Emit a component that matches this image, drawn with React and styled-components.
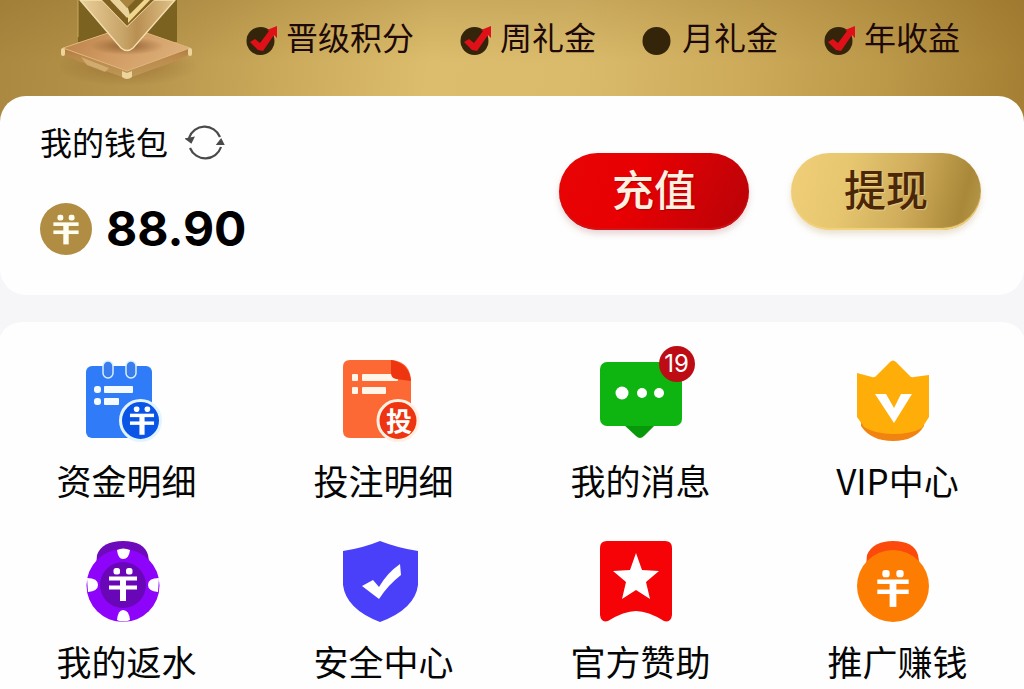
import React from "react";
import styled, { createGlobalStyle } from 'styled-components';

const GlobalStyle = createGlobalStyle`
  body {
    margin: 0;
    background-color: #f6f5f8;
    font-family: "Noto Sans CJK SC", "Noto Sans", sans-serif;
    color: #060606;
  }
`

const Page = styled.div`
  width: 100%;
  overflow: hidden;
`

const Header = styled.header`
  display: flex;
  align-items: flex-start;
  gap: 46px;
  padding: 0 32px 28px 60px;
  background:
    linear-gradient(180deg, rgba(120, 84, 20, 0.18), rgba(120, 84, 20, 0) 50%),
    linear-gradient(96deg, #aa8840 0%, #b6944b 14%, #cbaa5b 28%, #dcbd6d 42%, #dabb6c 56%, #cdab5b 72%, #bc9849 86%, #a47f33 100%);
`

const Emblem = styled.svg`
  display: block;
  flex: none;
  width: 140px;
  height: 96px;
`

const Perks = styled.ul`
  display: flex;
  gap: 46px;
  margin: 0;
  padding: 15px 0 0;
  list-style: none;
`

const Perk = styled.li`
  display: flex;
  align-items: flex-end;
  gap: 8px;
  font-size: 32px;
  line-height: 42px;
  white-space: nowrap;
  color: #1d0a08;
`

const PerkIcon = styled.svg`
  width: 32px;
  height: 32px;
`

const Wallet = styled.section`
  display: flex;
  justify-content: space-between;
  margin-top: -28px;
  padding: 24px 43px 36px 40px;
  background-color: #fefefe;
  border-radius: 26px;
`

const WalletTitle = styled.h2`
  display: flex;
  align-items: flex-end;
  gap: 17px;
  margin: 0;
  font-size: 32px;
  font-weight: 400;
  line-height: 42px;
`

const RefreshButton = styled.button`
  display: flex;
  padding: 0;
  border: none;
  background: none;
  cursor: pointer;
`

const Balance = styled.div`
  display: flex;
  align-items: center;
  gap: 14px;
  margin-top: 37px;
  font-family: Inter, "Liberation Sans", sans-serif;
  font-size: 48px;
  font-weight: 700;
  line-height: 60px;
  color: #000;
`

const Actions = styled.div`
  display: flex;
  align-items: flex-start;
  gap: 42px;
  padding-top: 33px;
`

const ActionButton = styled.button`
  width: 190px;
  height: 77px;
  padding: 0 0 8px;
  border: none;
  border-radius: 39px;
  font-family: inherit;
  font-size: 42px;
  font-weight: 500;
  line-height: 68px;
  cursor: pointer;
  color: ${props => props.$gold ? '#4b2708' : '#fff1e2'};
  background: ${props => props.$gold
    ? 'linear-gradient(105deg, #f0cf78 0%, #e6c66f 30%, #cfad5c 60%, #a98839 88%, #b89a4a 100%)'
    : 'linear-gradient(115deg, #e80406 0%, #e80002 40%, #cf0206 70%, #b80308 100%)'};
  box-shadow:
    inset 0 -2px 1px ${props => props.$gold ? '#f3d27c' : '#cf1517'},
    0 4px 6px ${props => props.$gold ? 'rgba(190, 160, 100, 0.3)' : 'rgba(170, 90, 90, 0.25)'};
  text-shadow: 1px 1px 1px ${props => props.$gold ? 'rgba(255, 236, 170, 0.5)' : 'rgba(120, 0, 0, 0.5)'};
`

const Menu = styled.nav`
  display: grid;
  grid-template-columns: repeat(4, 1fr);
  row-gap: 39px;
  margin: 27px -2px 0;
  padding: 38px 0 24px;
  background-color: #fefefe;
  border-radius: 24px 24px 0 0;
`

const MenuItem = styled.a`
  display: flex;
  flex-direction: column;
  align-items: center;
  gap: 16px;
  font-size: 35px;
  line-height: 44px;
  white-space: nowrap;
  text-decoration: none;
  color: inherit;
`

const IconBox = styled.span`
  position: relative;
  width: 82px;
  height: 82px;
`

const MenuSvg = styled.svg`
  display: block;
  width: 82px;
  height: 82px;
`

const Badge = styled.span`
  position: absolute;
  top: -14px;
  left: 59px;
  width: 36px;
  height: 36px;
  border-radius: 50%;
  background-color: #bd0c14;
  font-family: Inter, "Liberation Sans", sans-serif;
  font-size: 24px;
  line-height: 36px;
  text-align: center;
  color: #fff;
`

// coin sign, drawn around its own centre
const CoinSign = ({ x, y, scale = 1, color = '#fff' }) => (
  <g transform={`translate(${x} ${y}) scale(${scale})`} fill={color}>
    <rect x="-9.500" y="-17" width="6.500" height="6.500" rx="2.500" />
    <rect x="3" y="-17" width="6.500" height="6.500" rx="2.500" />
    <rect x="-14" y="-8.500" width="28" height="4" />
    <rect x="-14" y="0.500" width="28" height="4" />
    <rect x="-3" y="-7" width="6" height="23" />
  </g>
)

const VipEmblem = () => (
  <Emblem viewBox="0 0 140 96" aria-hidden="true">
    <defs>
      <linearGradient id="plate" x1="0" y1="0" x2="1" y2="0.3">
        <stop offset="0" stopColor="#b97f47" />
        <stop offset="0.5" stopColor="#d09a62" />
        <stop offset="1" stopColor="#dcae78" />
      </linearGradient>
      <linearGradient id="vee" x1="0" y1="0" x2="1" y2="0">
        <stop offset="0" stopColor="#ead09a" />
        <stop offset="0.45" stopColor="#c8a468" />
        <stop offset="0.6" stopColor="#b98f52" />
        <stop offset="1" stopColor="#e0c288" />
      </linearGradient>
      <linearGradient id="edge" x1="0" y1="0" x2="0" y2="1">
        <stop offset="0" stopColor="#b17a40" />
        <stop offset="1" stopColor="#d2a766" stopOpacity="0.5" />
      </linearGradient>
      <radialGradient id="shade">
        <stop offset="0" stopColor="#7d4f22" stopOpacity="0.75" />
        <stop offset="1" stopColor="#7d4f22" stopOpacity="0" />
      </radialGradient>
    </defs>
    <ellipse cx="67" cy="66" rx="72" ry="20" fill="url(#shade)" opacity="0.55" />
    <path d="M18 0H117V42H18Z" fill="#7c6220" />
    <path d="M18 0V37" stroke="#caa75a" />
    <path d="M3 48L67 70L130 48V54L116 61L72 77H62L18 61L3 54Z" fill="url(#edge)" />
    <path d="M3 48L60 29H75L130 48L67 71Z" fill="url(#plate)" stroke="#dfb67c" strokeWidth="1" />
    <ellipse cx="67" cy="46" rx="37" ry="9" fill="url(#shade)" />
    <path d="M21 57L49 68L45 72L27 65Z" fill="#dcb77d" opacity="0.7" />
    <g fill="#edd39c">
      <rect x="1" y="48" width="4" height="8" rx="2" />
      <rect x="128" y="48" width="4" height="8" rx="2" />
      <path d="M62 71L67 73L72 71V77Q67 81 62 77Z" />
    </g>
    <path d="M20 0L61 48Q67 53 73 48L115 0H94L67 26L42 0Z" fill="url(#vee)" stroke="#f3dfad" strokeWidth="1.4" />
    <path d="M42 0L67 26L94 0H86L67 18L50 0Z" fill="#80601f" />
    <path d="M50 0L67 18L70 15L68 8L60 0Z" fill="#ead39a" />
    <path d="M84 0L68 16V23L90 0Z" fill="#f0d58e" />
    <path d="M60 0L67 8L75 0Z" fill="#a9843e" />
  </Emblem>
)

const perks = [
  { label: '晋级积分', checked: true },
  { label: '周礼金', checked: true },
  { label: '月礼金', checked: false },
  { label: '年收益', checked: true },
]

const PerkMark = ({ checked }) => (
  <PerkIcon viewBox="0 0 32 32" aria-hidden="true">
    <circle cx="14.5" cy="16" r="14" fill="#33240a" />
    {checked && (
      <path d="M4 17L9 14L14 18L23 6L21 5L31 1L31 13L28 10L17 26L12 25Z" fill="#df1018" />
    )}
  </PerkIcon>
)

const FundsIcon = () => (
  <MenuSvg viewBox="0 0 82 82">
    <rect x="0" y="6" width="66" height="72" rx="6" fill="#307cf8" />
    <rect x="17" y="1" width="10" height="17" rx="5" fill="#3b7dee" stroke="#d9f0ff" strokeWidth="1.5" />
    <rect x="40" y="1" width="10" height="17" rx="5" fill="#3b7dee" stroke="#d9f0ff" strokeWidth="1.5" />
    <g fill="#f4fbff">
      <rect x="8" y="26" width="7" height="7" rx="3" />
      <rect x="18" y="26" width="29" height="7" rx="1" />
      <rect x="8" y="38" width="7" height="7" rx="3" />
      <rect x="18" y="38" width="15" height="7" rx="1" />
    </g>
    <circle cx="54.500" cy="60.500" r="20" fill="#0a55e6" stroke="#e4f4ff" strokeWidth="3" />
    <CoinSign x={56} y={61} scale={0.86} />
  </MenuSvg>
)

const BetSvg = styled(MenuSvg)`
  text {
    font-size: 26px;
    font-weight: 700;
  }
`

const BetsIcon = () => (
  <BetSvg viewBox="0 0 82 82">
    <path d="M7 0H50Q68 3 68 22V78H7Q0 78 0 71V7Q0 0 7 0Z" fill="#fc6935" />
    <g fill="#fff5e8">
      <rect x="9" y="14" width="6" height="7" rx="1" />
      <rect x="19" y="14" width="36" height="7" rx="1" />
      <rect x="9" y="27" width="6" height="7" rx="1" />
      <rect x="19" y="27" width="24" height="7" rx="1" />
    </g>
    <path d="M48 0Q66 3 68 21L53 19Q48 18 48 13Z" fill="#ee3510" />
    <circle cx="55" cy="60.500" r="20" fill="#ee3410" stroke="#fff0e2" strokeWidth="3" />
    <text x="56" y="71" textAnchor="middle" fill="#fff">投</text>
  </BetSvg>
)

const MessageIcon = () => (
  <MenuSvg viewBox="0 0 82 82">
    <path d="M23 64H56L44 76Q40 80 36 76Z" fill="#079909" />
    <rect x="0" y="2" width="82" height="64" rx="7" fill="#0eb510" />
    <circle cx="22" cy="33" r="6.500" fill="#fff" />
    <circle cx="42" cy="33" r="5" fill="#fff" />
    <circle cx="59" cy="33" r="5" fill="#fff" />
  </MenuSvg>
)

const VipIcon = () => (
  <MenuSvg viewBox="0 0 82 82">
    <path d="M4 55V66Q14 81 36 81Q58 81 67 66V55Z" fill="#f18411" />
    <path d="M0 13L15 17Q18 18 20 15L33 2Q36 -1 39 2L52 15Q54 18 57 17L72 15V57L65 68Q54 74 36 74Q18 74 7 67L0 57Z" fill="#ffad08" />
    <path d="M18 34H29L37 48L44 34H55L37 63Z" fill="#fff" />
  </MenuSvg>
)

const RebateIcon = () => (
  <MenuSvg viewBox="0 0 82 82">
    <path d="M10 26L11 14Q16 0 37 0Q58 0 62 14L64 26Z" fill="#6d0aba" />
    <circle cx="37" cy="44.500" r="36.500" fill="#8e04fa" />
    <circle cx="37" cy="44" r="23" fill="#6907b8" />
    <g fill="#fff">
      <path d="M31 9Q37 6 44 9Q43 18 37 18Q32 18 31 9Z" />
      <path d="M31 79Q37 82 44 79Q43 69 37 69Q32 69 31 79Z" />
      <path d="M1 37Q12 37 12 44Q12 50 2 51Z" />
      <path d="M73 37Q62 37 62 44Q62 50 72 51Z" />
    </g>
    <CoinSign x={37} y={44} />
  </MenuSvg>
)

const SecurityIcon = () => (
  <MenuSvg viewBox="0 0 82 82">
    <path d="M0 10Q20 7 37 0Q55 7 75 10V44Q72 68 37 81Q3 68 0 44Z" fill="#4a40fa" />
    <path d="M19 45L30 39L36 46Q44 32 57 23L58 34Q45 44 36 58Z" fill="#fff" />
  </MenuSvg>
)

const SponsorIcon = () => (
  <MenuSvg viewBox="0 0 82 82">
    <path d="M7 0H65Q72 0 72 7V74Q71 82 64 80Q48 70 36 70Q24 70 8 80Q1 82 0 74V7Q0 0 7 0Z" fill="#f50306" />
    <path d="M36 12L42 29L59 30L46 41L50 58L36 49L22 58L26 41L13 30L30 29Z" fill="#fff" />
  </MenuSvg>
)

const PromoteIcon = () => (
  <MenuSvg viewBox="0 0 82 82">
    <path d="M9 26L10 14Q16 0 36 0Q57 0 61 14L63 26Z" fill="#fc4a0c" />
    <circle cx="36" cy="45" r="36" fill="#fd7d02" />
    <CoinSign x={36} y={48} scale={1.12} />
  </MenuSvg>
)

const menuItems = [
  { label: '资金明细', icon: <FundsIcon /> },
  { label: '投注明细', icon: <BetsIcon /> },
  { label: '我的消息', icon: <MessageIcon />, badge: 19 },
  { label: 'VIP中心', icon: <VipIcon /> },
  { label: '我的返水', icon: <RebateIcon /> },
  { label: '安全中心', icon: <SecurityIcon /> },
  { label: '官方赞助', icon: <SponsorIcon /> },
  { label: '推广赚钱', icon: <PromoteIcon /> },
]

const App = () => {
  return (
    <Page>
      <GlobalStyle />
      <Header>
        <VipEmblem />
        <Perks>
          {perks.map(perk => (
            <Perk key={perk.label}>
              <PerkMark checked={perk.checked} />
              {perk.label}
            </Perk>
          ))}
        </Perks>
      </Header>
      <Wallet>
        <div>
          <WalletTitle>
            我的钱包
            <RefreshButton type="button" aria-label="刷新">
              <svg width="40" height="38" viewBox="0 0 40 38" fill="none" stroke="#4a4a4a" strokeWidth="2.200">
                <path d="M4 14A16.500 16.500 0 0 1 35 13" />
                <path d="M36 23A16.500 16.500 0 0 1 5 24" />
                <path d="M2 15L8 14L6 18Z" fill="#4a4a4a" />
                <path d="M33 20L36 16L38 20Z" fill="#4a4a4a" />
              </svg>
            </RefreshButton>
          </WalletTitle>
          <Balance>
            <svg width="52" height="52" viewBox="0 0 52 52" aria-hidden="true">
              <circle cx="26" cy="26" r="26" fill="#b08d42" />
              <CoinSign x={26} y={27} scale={0.9} color="#fffdf0" />
            </svg>
            88.90
          </Balance>
        </div>
        <Actions>
          <ActionButton type="button">充值</ActionButton>
          <ActionButton type="button" $gold>提现</ActionButton>
        </Actions>
      </Wallet>
      <Menu>
        {menuItems.map(item => (
          <MenuItem key={item.label} href="#">
            <IconBox>
              {item.icon}
              {item.badge && <Badge>{item.badge}</Badge>}
            </IconBox>
            {item.label}
          </MenuItem>
        ))}
      </Menu>
    </Page>
  )
}

export default App;
